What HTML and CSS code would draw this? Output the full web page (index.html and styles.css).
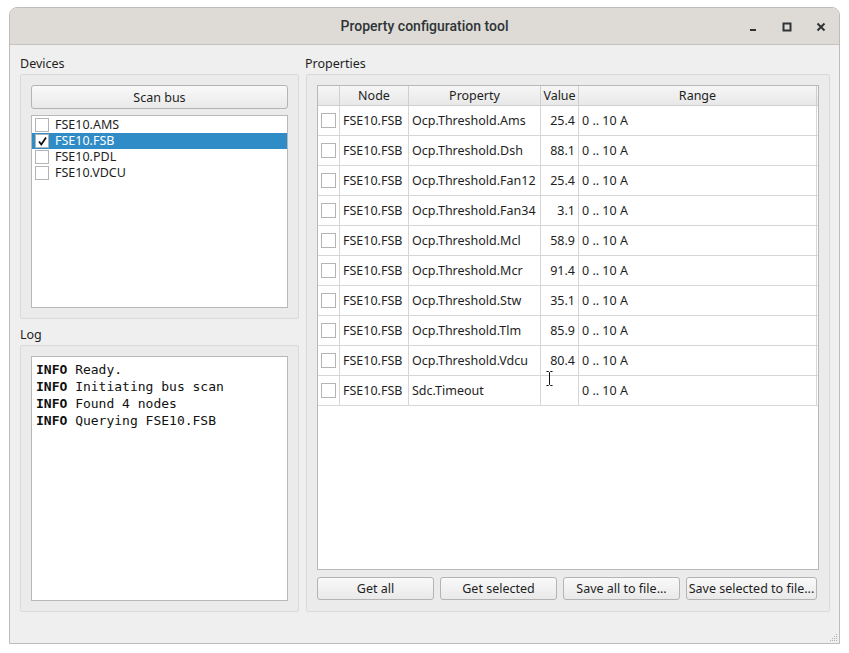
FILE: index.html
```html
<!DOCTYPE html>
<html>
<head>
<meta charset="utf-8">
<link rel="stylesheet" href="styles.css">
</head>
<body>
<div class="window">
  <div class="titlebar">
    <div class="title">Property configuration tool</div>
    <div class="controls">
      <svg class="ctl" width="10" height="10" viewBox="0 0 10 10"><rect x="2" y="7" width="6" height="2" fill="#2e3436"/></svg>
      <svg class="ctl" width="10" height="10" viewBox="0 0 10 10"><rect x="1.5" y="1.5" width="7" height="7" fill="none" stroke="#2e3436" stroke-width="2"/></svg>
      <svg class="ctl" width="10" height="10" viewBox="0 0 10 10"><path d="M1.5 1.5 L8.5 8.5 M8.5 1.5 L1.5 8.5" stroke="#2e3436" stroke-width="2"/></svg>
    </div>
  </div>
  <div class="content">
    <div class="leftcol">
      <div class="label">Devices</div>
      <div class="group devices">
        <div class="btn scan">Scan bus</div>
        <div class="list">
          <div class="item"><span class="cb"></span>FSE10.AMS</div>
          <div class="item sel"><span class="cb checked"><svg width="11" height="11" viewBox="0 0 11 11"><path d="M2 5.5 L4.3 8.5 L9 1.5" fill="none" stroke="#111" stroke-width="1.8"/></svg></span>FSE10.FSB</div>
          <div class="item"><span class="cb"></span>FSE10.PDL</div>
          <div class="item"><span class="cb"></span>FSE10.VDCU</div>
        </div>
      </div>
      <div class="label log-label">Log</div>
      <div class="group log">
        <div class="logbox">
          <div><b>INFO</b> Ready.</div>
          <div><b>INFO</b> Initiating bus scan</div>
          <div><b>INFO</b> Found 4 nodes</div>
          <div><b>INFO</b> Querying FSE10.FSB</div>
        </div>
      </div>
    </div>
    <div class="rightcol">
      <div class="label">Properties</div>
      <div class="group props">
        <div class="table">
          <div class="row head">
            <div class="c c0"></div>
            <div class="c c1">Node</div>
            <div class="c c2">Property</div>
            <div class="c c3">Value</div>
            <div class="c c4">Range</div>
          </div>
          <div class="row"><div class="c c0"><span class="cb"></span></div><div class="c c1">FSE10.FSB</div><div class="c c2">Ocp.Threshold.Ams</div><div class="c c3">25.4</div><div class="c c4">0 .. 10 A</div></div>
          <div class="row"><div class="c c0"><span class="cb"></span></div><div class="c c1">FSE10.FSB</div><div class="c c2">Ocp.Threshold.Dsh</div><div class="c c3">88.1</div><div class="c c4">0 .. 10 A</div></div>
          <div class="row"><div class="c c0"><span class="cb"></span></div><div class="c c1">FSE10.FSB</div><div class="c c2">Ocp.Threshold.Fan12</div><div class="c c3">25.4</div><div class="c c4">0 .. 10 A</div></div>
          <div class="row"><div class="c c0"><span class="cb"></span></div><div class="c c1">FSE10.FSB</div><div class="c c2">Ocp.Threshold.Fan34</div><div class="c c3">3.1</div><div class="c c4">0 .. 10 A</div></div>
          <div class="row"><div class="c c0"><span class="cb"></span></div><div class="c c1">FSE10.FSB</div><div class="c c2">Ocp.Threshold.Mcl</div><div class="c c3">58.9</div><div class="c c4">0 .. 10 A</div></div>
          <div class="row"><div class="c c0"><span class="cb"></span></div><div class="c c1">FSE10.FSB</div><div class="c c2">Ocp.Threshold.Mcr</div><div class="c c3">91.4</div><div class="c c4">0 .. 10 A</div></div>
          <div class="row"><div class="c c0"><span class="cb"></span></div><div class="c c1">FSE10.FSB</div><div class="c c2">Ocp.Threshold.Stw</div><div class="c c3">35.1</div><div class="c c4">0 .. 10 A</div></div>
          <div class="row"><div class="c c0"><span class="cb"></span></div><div class="c c1">FSE10.FSB</div><div class="c c2">Ocp.Threshold.Tlm</div><div class="c c3">85.9</div><div class="c c4">0 .. 10 A</div></div>
          <div class="row"><div class="c c0"><span class="cb"></span></div><div class="c c1">FSE10.FSB</div><div class="c c2">Ocp.Threshold.Vdcu</div><div class="c c3">80.4</div><div class="c c4">0 .. 10 A</div></div>
          <div class="row"><div class="c c0"><span class="cb"></span></div><div class="c c1">FSE10.FSB</div><div class="c c2">Sdc.Timeout</div><div class="c c3"></div><div class="c c4">0 .. 10 A</div></div>
          <svg class="ibeam" width="7" height="15" viewBox="0 0 7 15"><path d="M0.5 0.5 H2.5 L3.5 1.5 L4.5 0.5 H6.5 M3.5 1.5 V13.5 M0.5 14.5 H2.5 L3.5 13.5 L4.5 14.5 H6.5" fill="none" stroke="#111" stroke-width="1"/></svg>
        </div>
        <div class="buttons">
          <div class="btn">Get all</div>
          <div class="btn">Get selected</div>
          <div class="btn">Save all to file...</div>
          <div class="btn">Save selected to file...</div>
        </div>
      </div>
    </div>
  </div>
  <svg class="grip" width="10" height="10" viewBox="0 0 10 10">
    <g fill="#b0b0b0">
      <rect x="8" y="2" width="1" height="1"/>
      <rect x="6" y="4" width="1" height="1"/><rect x="8" y="4" width="1" height="1"/>
      <rect x="4" y="6" width="1" height="1"/><rect x="6" y="6" width="1" height="1"/><rect x="8" y="6" width="1" height="1"/>
      <rect x="2" y="8" width="1" height="1"/><rect x="4" y="8" width="1" height="1"/><rect x="6" y="8" width="1" height="1"/><rect x="8" y="8" width="1" height="1"/>
    </g>
  </svg>
</div>
</body>
</html>
```

FILE: styles.css
```css
html, body {
  margin: 0;
  padding: 0;
  background: #ffffff;
}
body {
  padding: 7px 0 0 9px;
  font-family: "Noto Sans", sans-serif;
  font-size: 12.5px;
  color: #1e1e1e;
}
.window {
  position: relative;
  width: 829px;
  height: 635px;
  border: 1px solid #bcbcbc;
  border-radius: 8px 8px 0 0;
  background: #efefef;
  display: flex;
  flex-direction: column;
  overflow: hidden;
}
.titlebar {
  height: 36px;
  flex: none;
  background: #dedbd7;
  border-bottom: 1px solid #c6c3be;
  display: flex;
  align-items: center;
  justify-content: center;
  position: relative;
}
.title {
  font-family: "Roboto", sans-serif;
  font-weight: 500;
  font-size: 14px;
  color: #2e3436;
}
.controls {
  position: absolute;
  right: 13px;
  top: 14px;
  display: flex;
  gap: 24px;
}
.ctl { display: block; }
.content {
  display: flex;
  gap: 7px;
  padding: 10px 9px 0 10px;
}
.leftcol {
  width: 279px;
  display: flex;
  flex-direction: column;
}
.rightcol {
  width: 524px;
  display: flex;
  flex-direction: column;
}
.label {
  height: 19px;
  box-sizing: border-box;
  padding-top: 1px;
  line-height: 16px;
}
.log-label { margin-top: 7px; }
.rightcol .label { margin-left: -1px; }
.group {
  border: 1px solid #dadada;
  border-radius: 2px;
  background: #ebebeb;
  box-sizing: border-box;
  padding: 10px;
  display: flex;
  flex-direction: column;
}
.devices { height: 245px; gap: 6px; }
.log { height: 267px; }
.props { height: 538px; }
.btn {
  height: 23px;
  box-sizing: border-box;
  border: 1px solid #b4b4b4;
  border-radius: 3px;
  background: linear-gradient(#f9f9f9, #e9e9e9);
  display: flex;
  align-items: center;
  justify-content: center;
  color: #1e1e1e;
}
.scan { flex: none; height: 24px; }
.list {
  flex: 1;
  background: #fff;
  border: 1px solid #b8b8b8;
  padding-top: 1px;
}
.item {
  height: 16px;
  display: flex;
  align-items: center;
  padding-left: 3px;
  line-height: 16px;
}
.item.sel {
  background: #308cc6;
  color: #fff;
}
.cb {
  width: 12px;
  height: 12px;
  border: 1px solid #b4b4b4;
  background: #fff;
  display: inline-flex;
  align-items: center;
  justify-content: center;
  margin-right: 6px;
  flex: none;
}
.logbox {
  flex: 1;
  background: #fff;
  border: 1px solid #b8b8b8;
  padding: 4px 4px;
  font-family: "DejaVu Sans Mono", monospace;
  font-size: 13px;
  line-height: 17px;
  color: #111;
}
.logbox b { font-weight: bold; }
.table {
  position: relative;
  height: 485px;
  box-sizing: border-box;
  border: 1px solid #b8b8b8;
  background: #fff;
}
.row {
  display: flex;
  height: 30px;
  border-bottom: 1px solid #d6d6d6;
  box-sizing: border-box;
}
.row.head {
  height: 20px;
  background: linear-gradient(#f6f6f6, #e8e8e8);
  border-bottom: 1px solid #cfcfcf;
}
.c {
  box-sizing: border-box;
  border-right: 1px solid #d6d6d6;
  display: flex;
  align-items: center;
  padding: 0 3px;
  white-space: nowrap;
  overflow: hidden;
}
.head .c { justify-content: center; border-right-color: #cfcfcf; }
.c0 { width: 22px; padding-left: 3px; }
.c0 .cb { margin: 0; width: 13px; height: 13px; }
.c1 { width: 69px; }
.c2 { width: 132px; }
.c3 { width: 38px; justify-content: flex-end; }
.c4 { width: 238px; }
.ibeam {
  position: absolute;
  left: 228px;
  top: 285px;
}
.buttons {
  display: flex;
  gap: 6px;
  margin-top: 7px;
}
.buttons .btn { width: 117px; }
.buttons .btn:last-child { width: 131px; }
.grip {
  position: absolute;
  right: 1px;
  bottom: 1px;
}
```
